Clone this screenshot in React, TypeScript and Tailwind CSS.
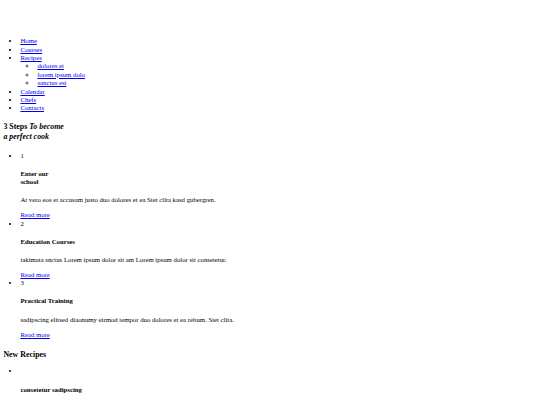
const nav = [
  { label: 'Home' },
  { label: 'Courses' },
  { label: 'Recipes', children: ['dolores et', 'lorem ipsum dolo', 'sanctus est'] },
  { label: 'Calendar' },
  { label: 'Chefs' },
  { label: 'Contacts' },
]

const steps = [
  { n: '1', title: ['Enter our', 'school'], text: 'At vero eos et accusam justo duo dolores et ea Stet clita kasd gubergren.' },
  { n: '2', title: ['Education Courses'], text: 'takimata snctus Lorem ipsum dolor sit am Lorem ipsum dolor sit consetetur.' },
  { n: '3', title: ['Practical Training'], text: 'sadipscing elitsed diaonumy eirmod tempor duo dolores et ea rebum. Stet clita.' },
]

function Link({ children }: { children: React.ReactNode }) {
  return (
    <a href="#" className="text-[#0000ee] underline">
      {children}
    </a>
  )
}

export default function App() {
  return (
    <div className="bg-white m-[3.4px] font-['Liberation_Serif',serif] text-[6.75px] leading-[8.4px] text-black">
      <header className="h-[27px]" />

      <ul className="list-disc pl-[17px] my-[6.75px]">
        {nav.map((item) => (
          <li key={item.label}>
            <Link>{item.label}</Link>
            {item.children && (
              <ul className="[list-style-type:circle] pl-[17px] marker:text-[7.5px] marker:text-gray-600">
                {item.children.map((c) => (
                  <li key={c}>
                    <Link>{c}</Link>
                  </li>
                ))}
              </ul>
            )}
          </li>
        ))}
      </ul>

      <h3 className="text-[7.9px] leading-[10.5px] font-bold my-[9px]">
        3 Steps <em>To become<br />a perfect cook</em>
      </h3>

      <ul className="list-disc pl-[17px] my-[6.75px]">
        {steps.map((s) => (
          <li key={s.n}>
            <span>{s.n}</span>
            <h4 className="font-bold leading-[8px] my-[9.5px]">
              {s.title.map((t, i) => (
                <span key={t}>
                  {i > 0 && <br />}
                  {t}
                </span>
              ))}
            </h4>
            <p className="leading-[9px] my-[7px]">{s.text}</p>
            <Link>Read more</Link>
          </li>
        ))}
      </ul>

      <h3 className="text-[7.9px] leading-[10.5px] font-bold mt-[10.5px] mb-[7px]">New Recipes</h3>

      <ul className="list-disc pl-[17px] my-[6.75px]">
        <li>
          <div>{'\u00a0'}</div>
          <h4 className="font-bold leading-[8px] my-[10.5px]">consetetur sadipscing</h4>
        </li>
      </ul>
    </div>
  )
}
